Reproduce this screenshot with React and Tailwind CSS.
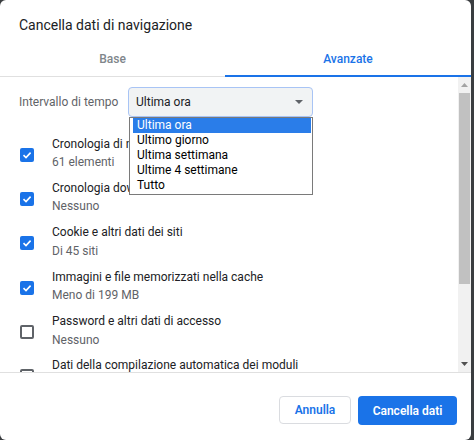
import React from "react";

const rows = [
  { title: "Cronologia di navigazione", sub: "61 elementi", checked: true },
  { title: "Cronologia download", sub: "Nessuno", checked: true },
  { title: "Cookie e altri dati dei siti", sub: "Di 45 siti", checked: true },
  { title: "Immagini e file memorizzati nella cache", sub: "Meno di 199 MB", checked: true },
  { title: "Password e altri dati di accesso", sub: "Nessuno", checked: false },
  { title: "Dati della compilazione automatica dei moduli", sub: "Nessuno", checked: false },
];

const options = ["Ultima ora", "Ultimo giorno", "Ultima settimana", "Ultime 4 settimane", "Tutto"];

const Checkbox = ({ checked }) =>
  checked ? (
    <div className="w-[14px] h-[14px] rounded-[2px] bg-[#1a73e8] flex items-center justify-center">
      <svg width="10" height="10" viewBox="0 0 10 10">
        <path d="M1.5 5.2 L4 7.6 L8.6 2.6" fill="none" stroke="white" strokeWidth="1.6" />
      </svg>
    </div>
  ) : (
    <div className="w-[14px] h-[14px] rounded-[2px] border-2 border-[#5f6368]" />
  );

export default function App() {
  return (
    <div className="w-[474px] h-[440px] bg-[#3a3d40] font-['Roboto',sans-serif]">
      <div className="w-[471px] h-[440px] bg-white rounded-[6px] flex flex-col overflow-hidden">
        <div className="h-[42px] pl-[19px] pt-[15px] text-[14px] text-[#202124] leading-[20px]">
          Cancella dati di navigazione
        </div>
        <div className="flex h-[35px] border-b border-[#e0e0e0] text-[12px] font-medium">
          <div className="w-[225px] flex items-center justify-center text-[#80868b]">Base</div>
          <div className="flex-1 flex items-center justify-center text-[#1a73e8] border-b-2 border-[#1a73e8] -mb-px">
            Avanzate
          </div>
        </div>
        <div className="relative flex h-[296px] border-b border-[#e0e0e0]">
          <div className="flex-1 overflow-hidden pt-[10px]">
            <div className="flex items-center h-[30px]">
              <div className="w-[128px] pl-[19px] text-[12px] text-[#5f6368]">Intervallo di tempo</div>
              <div className="w-[185px] h-[30px] rounded-[4px] border border-[#a8c4f5] bg-[#f1f3f4] flex items-center justify-between pl-[7px] pr-[9px] text-[12px] text-[#202124]">
                <span>Ultima ora</span>
                <svg width="8" height="4" viewBox="0 0 8 4">
                  <path d="M0 0 L8 0 L4 4 Z" fill="#5f6368" />
                </svg>
              </div>
            </div>
            <div className="flex flex-col gap-[8.4px] mt-[18px]">
              {rows.map((r) => (
                <div key={r.title} className="flex items-center h-[36px]">
                  <div className="w-[52px] pl-[20px] pt-[3px]">
                    <Checkbox checked={r.checked} />
                  </div>
                  <div className="flex flex-col text-[12px] leading-[18.5px]">
                    <span className="text-[#202124]">{r.title}</span>
                    <span className="text-[#5f6368]">{r.sub}</span>
                  </div>
                </div>
              ))}
            </div>
          </div>
          <div className="w-[13px] bg-[#f1f1f1] flex flex-col items-center">
            <div className="h-[16px] flex items-center justify-center">
              <svg width="7" height="4" viewBox="0 0 7 4">
                <path d="M0 4 L7 4 L3.5 0 Z" fill="#a3a3a3" />
              </svg>
            </div>
            <div className="w-[11px] h-[191px] bg-[#c1c1c1]" />
            <div className="flex-1" />
            <div className="h-[16px] flex items-center justify-center">
              <svg width="7" height="4" viewBox="0 0 7 4">
                <path d="M0 0 L7 0 L3.5 4 Z" fill="#505050" />
              </svg>
            </div>
          </div>
          <div className="absolute left-[129px] top-[40px] w-[184px] bg-white border border-[#7a7a7a] pl-[3px] pr-px pb-[1px] text-[12px] leading-[15px] text-black">
            {options.map((o, i) => (
              <div key={o} className={i === 0 ? "bg-[#2a7de9] text-white px-[4px] h-[15px]" : "px-[4px] h-[15px]"}>
                {o}
              </div>
            ))}
          </div>
        </div>
        <div className="flex justify-end gap-[7px] pr-[14px] pt-[23px]">
          <button className="w-[72px] h-[28px] rounded-[4px] border border-[#dadce0] bg-white text-[12px] font-semibold text-[#1a73e8]">
            Annulla
          </button>
          <button className="w-[99px] h-[29px] rounded-[4px] bg-[#1a73e8] text-[12px] font-semibold text-white">
            Cancella dati
          </button>
        </div>
      </div>
    </div>
  );
}
